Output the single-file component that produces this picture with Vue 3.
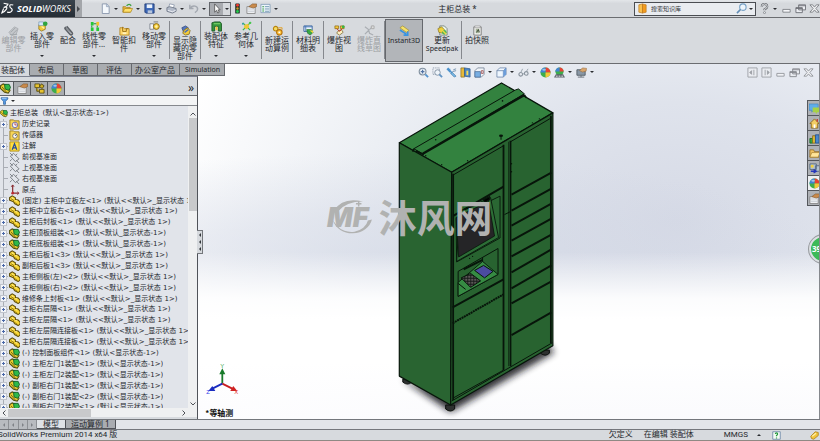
<script setup>
import { ref } from 'vue'

const icons = {
  newDoc: '<path d="M2.5 1h5l2.500 3v7.500h-7.500z" fill="#f4f8fc" stroke="#8a97ad"/><path d="M7 1v3h3" fill="#c5d3e5" stroke="#8a97ad" stroke-width=".7"/>',
  open: '<path d="M1 10V4h3l1 1h4v5z" fill="#e8b53a" stroke="#9b7310" stroke-width=".7"/><path d="M1 10l2-4h8.500L9.500 10z" fill="#ffe06a" stroke="#a87f14" stroke-width=".7"/><path d="M5 3q3-3 5 0" fill="none" stroke="#38a03a" stroke-width="1.500"/>',
  save: '<path d="M1 1h10v10H2l-1-1z" fill="#3c68b8" stroke="#243f7a"/><path d="M3 1.500h6v4H3z" fill="#e9f1fb"/><path d="M4 8h5v3H4z" fill="#b7c6dd"/>',
  print: '<path d="M4 1l5 1-1 4-5-1z" fill="#fff" stroke="#75849c" stroke-width=".7"/><path d="M1 5l3-1 7 2v3l-4 2-6-2z" fill="#b2bac8" stroke="#626b7c" stroke-width=".8"/><path d="M2 8l5 1.500L10.500 8" stroke="#edf0f5" fill="none"/>',
  undo: '<path d="M2 2v4h4M2.500 5.500c3-4 8-2 8 1 0 2-1 3-3 4" fill="none" stroke="#a3a8b0" stroke-width="1.600"/>',
  cursor: '<path d="M4 1v9l2-2 1.500 3 1.500-1-1.500-2.500H10z" fill="#fff" stroke="#444" stroke-width=".8"/>',
  traffic: '<rect x="3.500" y=".5" width="5" height="11" rx="1" fill="#22332a"/><circle cx="6" cy="2.500" r="1.600" fill="#f03a30"/><circle cx="6" cy="6" r="1.300" fill="#c99d25"/><circle cx="6" cy="9.300" r="1.600" fill="#25c84c"/>',
  props: '<path d="M1 4h9v7.500H1z" fill="#eef0f3" stroke="#777" stroke-width=".8"/><path d="M2 6.500h7M2 9h7" stroke="#b2b8c0" stroke-width=".7"/><path d="M3 4l4-3h4.500v3L8 5.500z" fill="#c98a4b" stroke="#7d5024" stroke-width=".6"/>',
  options: '<path d="M1 1.500h10v9H1z" fill="#edf6fb" stroke="#7694b2" stroke-width=".8"/><path d="M2.500 3.500h2v1h-2zM2.500 6h2v1h-2zM2.500 8.300h2v1h-2z" fill="#3c9b4b"/><path d="M5.500 4h4.500M5.500 6.500h4.500M5.500 9h4.500" stroke="#4d789e" stroke-width=".8"/>',
  partGrey: '<path d="M1 8l6-6 4 2-2 6-5 1.500z" fill="#c4c7cb" stroke="#a4a7ab" stroke-width=".8"/><path d="M3 8l5-5M5 10l5-5M2 10.500h8" stroke="#a0a4a8"/>',
  insert: '<path d="M2 4l4-2 3 2v5l-4 2-3-2z" fill="#f3cc3c" stroke="#8c6c10" stroke-width=".8"/><path d="M2 1h5v4H2z" fill="#d5e9fa" stroke="#5f86ad" stroke-width=".6"/><circle cx="9" cy="3" r="2.500" fill="#2fa540"/><path d="M5 6l3 2" stroke="#fff3a0" stroke-width="1.500"/>',
  mate: '<path d="M4 1.500l6 7c1 2-1 3-2.500 1.500L2.500 4.500C1.500 3 3 2 4 3l4.500 5" fill="none" stroke="#5c6066" stroke-width="1.700"/><path d="M3.500 2.500l5 6" stroke="#b5bac0" stroke-width=".8"/>',
  linear: '<path d="M2 1h3v4H2zM2 7h3v4H2zM8 7h3v4H8z" fill="#24c935"/><path d="M8 1h3v4H8z" fill="#f4c42a"/><path d="M3 5v2M9 5v2M5 3l3 0" stroke="#138a28"/>',
  smart: '<path d="M1 3h4l1 1h5v7H1z" fill="#ffd66a" stroke="#b08118" stroke-width=".9"/><path d="M4 2v5h4V4h2" fill="none" stroke="#966b13"/><path d="M4 8h4v2H4z" fill="#fff4c0"/>',
  move: '<path d="M1 3h4v6H1z" fill="#f5f6f8" stroke="#68707d" stroke-width=".8"/><circle cx="8" cy="6" r="3.200" fill="#f7ce3d" stroke="#8a680f"/><circle cx="8" cy="6" r="1.300" fill="#fff3af"/><path d="M5 1h5" stroke="#777"/>',
  showHide: '<path d="M2 3l4-2 3 2-1 4-4 1z" fill="#5476bf" stroke="#2d447c" stroke-width=".8"/><path d="M4 6l4-3 3 3-1 4-4 1-3-2z" fill="#f3cc3c" stroke="#806411" stroke-width=".8"/><path d="M5 8l4-3" stroke="#4e70b7" stroke-width="1.500"/>',
  feature: '<path d="M1 2l3-1h6l1.500 2v8H8V6H4v5H1z" fill="#35963e" stroke="#17551f" stroke-width=".9"/><path d="M3 3h7" stroke="#8de074"/><path d="M5 6h2v4H5z" fill="#f4ca36"/>',
  geometry: '<path d="M2 2l4 4 4-4M2 10l4-4 4 4" fill="none" stroke="#3cb64b" stroke-width="1.300"/><path d="M4 4l4-1 1 4-3 2-3-2z" fill="#efc735"/><circle cx="10" cy="2" r="1.300" fill="#47c84e"/><circle cx="2" cy="3" r="1" fill="#319eb3"/>',
  motion: '<circle cx="4" cy="4" r="2.500" fill="#f7dc60" stroke="#b6830f" stroke-width="1.200"/><circle cx="8" cy="8" r="3" fill="#ffc43b" stroke="#b6730d" stroke-width="1.200"/><circle cx="8" cy="8" r="1" fill="#fff"/><path d="M7 3h4v2" fill="none" stroke="#e09c1c"/>',
  bom: '<path d="M1 1h9v6H1z" fill="#eff6ff" stroke="#38639d"/><path d="M1 2h9M3 1v6" stroke="#4776b7"/><path d="M4 5h5l2 3-3 3-3-2z" fill="#37aa45" stroke="#266b27" stroke-width=".7"/><path d="M7 6h4v3z" fill="#f5d440"/>',
  explode: '<path d="M1 1h4v3H1zM7 1h4v3H7z" fill="#f5ca3b" stroke="#8f6914" stroke-width=".8"/><path d="M4 7l4-2 2 3-4 3-3-2z" fill="#fff0bf" stroke="#8e8050"/><path d="M3 4l3 3 3-3" fill="none" stroke="#c32c26"/><circle cx="10" cy="2" r="1.500" fill="#35b742"/>',
  explodeGrey: '<path d="M1 2l4 3 1 4 4 2M10 1L6 5M1 10l4-4" fill="none" stroke="#aaaeb3" stroke-width="1.300"/><path d="M8 1h3v3H8z" fill="#ddd" stroke="#aaa"/>',
  instant: '<path d="M1 3l3-2 7 5-3 2z" fill="#f5e26a" stroke="#a69135" stroke-width=".8"/><path d="M1 5.500l7 4.500M9.500 7v4H5" fill="none" stroke="#3794e1" stroke-width="1.800"/>',
  speed: '<path d="M3 1h5l3 3v7H3z" fill="#e9f3e7" stroke="#65706a" stroke-width=".8"/><path d="M1 4l4-2 3 3-2 4-4-1z" fill="#edcf3b" stroke="#836a15" stroke-width=".7"/><circle cx="8" cy="8" r="2.500" fill="#4db554"/><path d="M5 5l5 5" stroke="#efd843" stroke-width="1.500"/>',
  snapshot: '<path d="M2 2h8v9H2z" fill="#f7f7f4" stroke="#777"/><path d="M4 4h4v5H4z" fill="#a5b19a"/><path d="M3 1h6v2H3z" fill="#ededed" stroke="#888" stroke-width=".6"/><path d="M5 8l2-3 1 3" fill="none" stroke="#33422e"/>',
  zoomFit: '<circle cx="5" cy="5" r="3.700" fill="#e7eef5" stroke="#81909f" stroke-width="1.200"/><path d="M5 3v4M3 5h4" stroke="#5272a3" stroke-width="1.300"/><path d="M8 8l3 3" stroke="#5594cf" stroke-width="2"/>',
  zoomArea: '<path d="M1 1h7v7H1z" fill="none" stroke="#7c899c" stroke-dasharray="1 1"/><circle cx="6" cy="6" r="3" fill="#eef4fa" stroke="#8090a2"/><path d="M8 8l3 3" stroke="#6194c5" stroke-width="2"/>',
  prev: '<path d="M1 2l3 3v-3M2 1l5 6" fill="none" stroke="#4e93cd" stroke-width="1.500"/><path d="M7 6l4 4-2 1-4-4z" fill="#78b7e3" stroke="#3f7cad" stroke-width=".7"/><path d="M8 3l3-1M7 5l4-1" stroke="#718eab"/>',
  section: '<path d="M1 1h4v10H1z" fill="#e7b93a" stroke="#867027" stroke-width=".8"/><path d="M5 1l6 1v9l-6-1z" fill="#4c88c7" stroke="#2e588d" stroke-width=".8"/><path d="M7 4h2v5H7z" fill="#f6dc5b"/>',
  orient: '<path d="M1 4l3-3h7v7l-3 3H1z" fill="#f1f4f8" stroke="#768397" stroke-width=".9"/><path d="M1 5h6v6H1z" fill="#78aee2" stroke="#4b719b" stroke-width=".8"/><path d="M8 4h2v3H8z" fill="none" stroke="#a86061"/>',
  cube: '<path d="M1 4l3-3h7v7l-3 3H1z" fill="#eff7ff" stroke="#617da3" stroke-width=".8"/><path d="M1 4h7v7M8 4l3-3" fill="none" stroke="#617da3" stroke-width=".8"/><path d="M8 4l3-3v7l-3 3z" fill="#6c9edb"/>',
  glasses: '<circle cx="3" cy="8" r="2" fill="none" stroke="#87919b" stroke-width="1.200"/><circle cx="9" cy="7" r="2" fill="none" stroke="#87919b" stroke-width="1.200"/><path d="M3 6l2-4M9 5l2-3M5 8l2-1" fill="none" stroke="#949fa9"/>',
  ball: '<circle cx="6" cy="6" r="5.500" fill="#3dad4b"/><path d="M6 6V.5A5.500 5.500 0 0 1 11.500 6z" fill="#e84236"/><path d="M6 6H.5A5.500 5.500 0 0 1 6 .5z" fill="#4184d5"/><path d="M6 6h5.500a5.500 5.500 0 0 1-5.500 5.500z" fill="#f4c838"/><ellipse cx="4.500" cy="3" rx="2" ry="1" fill="#fff" opacity=".5"/>',
  scene: '<circle cx="6" cy="5" r="4.500" fill="#3dad4b"/><path d="M6 5V.5a4.500 4.500 0 0 1 4.500 4.500z" fill="#e84236"/><path d="M6 5H1.500A4.500 4.500 0 0 1 6 .5z" fill="#4184d5"/><path d="M0 11.500l2-3.500h8l2 3.500z" fill="#5d626b"/><path d="M2 10h2M5 10h2M8 10h2" stroke="#eee"/>',
  monitor: '<path d="M1 3h9v6H1z" fill="#8a98a6" stroke="#555f68"/><path d="M2 11h7M5.500 9v2" stroke="#626a73"/><path d="M4 4l3-3 4.500.500-.5 3-4 1z" fill="#d9a56b" stroke="#94683b" stroke-width=".6"/>',
  paneL: '<path d="M1 1h10v10H1z" fill="#eceef2" stroke="#8b8e94"/><path d="M7.500 3v6M5 4L3 6l2 2z" stroke="#8b8e94" fill="#8b8e94"/>',
  paneR: '<path d="M1 1h10v10H1z" fill="#eceef2" stroke="#8b8e94"/><path d="M4.500 3v6M7 4l2 2-2 2z" stroke="#8b8e94" fill="#8b8e94"/>',
  min: '<path d="M2 7h8v3H2z" fill="#f5f6f8" stroke="#777a80" stroke-width=".9"/>',
  restore: '<path d="M4 2h7.500v5.500H4zM1 5h7v5.500H1z" fill="#eceef2" stroke="#6d7076"/><path d="M4 3h7M1 6h7" stroke="#6d7076"/>',
  close: '<path d="M1 2h3l2 2.500L8 2h3L7.500 6l3.500 4H8L6 7.500 4 10H1l3.500-4z" fill="#f2f3f5" stroke="#73767b" stroke-width=".9"/>',
  assembly: '<path d="M.5 3l3-2 4.500 2 3 5-2 3-4-1-4.500-4z" fill="#ecd032" stroke="#54500d" stroke-width="1.100"/><path d="M5 1.500h5l1.500 3.500-2 3-4-1.500z" fill="#2fb848" stroke="#126028"/><path d="M2 4l5 6" stroke="#735f10"/>',
  part: '<path d="M.5 3l3-2 3.500 2v2l3 .5 2 2v2.500l-2 1.500-4-2-1-2-4.500-2z" fill="#f8d532" stroke="#5c4c08" stroke-width="1.100"/><path d="M2 4l3 1.500v2L9 10" fill="none" stroke="#7d6509" stroke-width=".8"/><path d="M3 3l2 1M7 6l2 .500" stroke="#fff3a3"/>',
  history: '<path d="M1 1h4l1 1h5v9H1z" fill="#f7d557" stroke="#9a7d24"/><circle cx="6.500" cy="6.500" r="3" fill="#eef4ff" stroke="#746aa1"/><path d="M6.500 4.500v2h2" fill="none" stroke="#c64c42"/>',
  sensor: '<path d="M1 1h4l1 1h5v9H1z" fill="#f7d557" stroke="#9a7d24"/><circle cx="6.500" cy="6.500" r="2.500" fill="#fff" stroke="#7a7160"/><path d="M6.500 6.500l2-2" stroke="#555"/>',
  note: '<path d="M1 1h10v10H1z" fill="#ffdd3c" stroke="#ad8c1e"/><path d="M3.500 9.500L6 3l2.500 6.500M4.500 7.500h3" fill="none" stroke="#264b9c" stroke-width="1.400"/>',
  plane: '<path d="M1.500 4.500L5 1.500l6 6-4 3zM1 1l3 3M8 9l3 3M9 2L7 4M3 8l-2 2" fill="none" stroke="#6a6f75" stroke-width=".9"/>',
  origin: '<path d="M4 1v9h6" fill="none" stroke="#882a30" stroke-width="1.300"/><path d="M2.500 3L4 1l1.500 2M9 8.500l2 1.500-2 1.500" fill="none" stroke="#882a30"/><circle cx="4" cy="10" r="1.500" fill="#bb2930"/>',
  config: '<path d="M1 1h5v4H1zM6 7h5v4H6z" fill="#e7c330" stroke="#574b14" stroke-width=".9"/><path d="M8 1l3 2-2 3-3-2zM3 5v4h3" fill="#d0af24" stroke="#574b14"/>',
  funnel: '<path d="M1 1h10v2L7.500 6.500V11h-3V6.500L1 3z" fill="#5499e3" stroke="#295d9c"/><path d="M2 2h7" stroke="#cbe6ff"/>',
  chat: '<path d="M0 1h10v7H5L3 10V8H0z" fill="#60ade9" stroke="#3b7cb4" stroke-width=".6"/><path d="M4 5h8v5h-3l-1 2-1-2H4z" fill="#a7d246"/>',
  home: '<path d="M1 6l5-5 5 5H9.500v5h-7V6z" fill="#f3ce65" stroke="#926c20"/><path d="M5 7h2v4H5z" fill="#fff"/><path d="M9 1v3" stroke="#c83a2e" stroke-width="1.500"/>',
  library: '<path d="M1 6h3v5H1z" fill="#35a646" stroke="#1c6c2a"/><path d="M4 3h3v8H4z" fill="#edc438" stroke="#8f6f18"/><path d="M7 2h4v9H7z" fill="#4b89cc" stroke="#28538e"/>',
  folder: '<path d="M1 10V2h4l1 2h5v6z" fill="#f0c262" stroke="#8b641e" stroke-width=".8"/><path d="M1 10l2-5h9l-2 5z" fill="#ffe59a" stroke="#9d7326" stroke-width=".7"/>',
  palette: '<path d="M1 1h7v6H1zM7 3h5v6H7z" fill="#b5c4d3" stroke="#576b82"/><path d="M2 2h3v3H2z" fill="#f1d13e"/><path d="M2 9h5M5 7l3 2-3 2" fill="none" stroke="#2636bb" stroke-width="1.400"/>',
  help: '<path d="M3 4q0-3 3-3t3 3q0 1.500-3 3v1" fill="none" stroke="#686c72" stroke-width="2.400"/><path d="M3 4q0-3 3-3t3 3q0 1.500-3 3v1" fill="none" stroke="#f3f4f6" stroke-width=".9"/><circle cx="6" cy="10.500" r="1.100" fill="#f3f4f6" stroke="#686c72" stroke-width=".7"/>',
  book: '<path d="M2 2l4-1v10l-4-1z" fill="#f8c04d" stroke="#b9741b" stroke-width=".7"/><path d="M6 1l4 1v8l-4 1z" fill="#f29b1e" stroke="#b9741b" stroke-width=".7"/>',
  glass: '<circle cx="7.500" cy="4.500" r="3.500" fill="#edf5fc" stroke="#76a1c5" stroke-width="1.200"/><path d="M5 7l-4 4" stroke="#638eb6" stroke-width="1.700"/>',
  helpBox: '<path d="M1 1h10v10H1z" fill="#f4fbf4" stroke="#5f7da0"/><path d="M4.500 4q0-1.500 1.500-1.500T7.500 4Q7.500 5 6 6v1M6 8.500V10" fill="none" stroke="#21993a" stroke-width="1.600"/>',
  tag: '<path d="M1 7l6-6 4 1v4l-6 5-3-1z" fill="#f1c43a" stroke="#a87b15"/><path d="M3 7l5-4" stroke="#fff0a6" stroke-width="1.500"/>'
}

const fileTools = [
  { icon: 'newDoc', label: '新建' },
  { icon: 'open', label: '打开' },
  { icon: 'save', label: '保存' },
  { icon: 'print', label: '打印' },
  { icon: 'undo', label: '撤消' }
]
const sideTools = [
  { icon: 'traffic', label: '重建模型' },
  { icon: 'props', label: '文件属性' },
  { icon: 'options', label: '选项' }
]

const ribbon = [
  [
    { icon: 'partGrey', text: '编辑零部件', disabled: true, size: 'slim' },
    { icon: 'insert', text: '插入零部件', drop: true },
    { icon: 'mate', text: '配合', size: 'small' },
    { icon: 'linear', text: '线性零部件...', drop: true },
    { icon: 'smart', text: '智能扣件' },
    { icon: 'move', text: '移动零部件', drop: true }
  ],
  [{ icon: 'showHide', text: '显示隐藏的零部件' }],
  [
    { icon: 'feature', text: '装配体特征', drop: true },
    { icon: 'geometry', text: '参考几何体', drop: true }
  ],
  [{ icon: 'motion', text: '新建运动算例' }],
  [{ icon: 'bom', text: '材料明细表' }],
  [
    { icon: 'explode', text: '爆炸视图' },
    { icon: 'explodeGrey', text: '爆炸直线草图', disabled: true }
  ],
  [
    { icon: 'instant', latin: 'Instant3D', size: 'wide', pressed: true },
    { icon: 'speed', text: '更新', latin: 'Speedpak', size: 'wide' }
  ],
  [{ icon: 'snapshot', text: '拍快照' }]
]

const tabs = ['装配体', '布局', '草图', '评估', '办公室产品', 'Simulation']
const activeTab = ref('装配体')

const panelTabs = [
  { icon: 'assembly', label: '设计树' },
  { icon: 'props', label: '属性' },
  { icon: 'config', label: '配置' },
  { icon: 'ball', label: '外观' }
]

const part = (text) => ({ icon: 'part', text, plus: true })
const asm = (text) => ({ icon: 'assembly', text, plus: true })
const tree = [
  { icon: 'assembly', text: '主柜总装  (默认<显示状态-1>)', root: true },
  { icon: 'history', text: '历史记录', plus: true },
  { icon: 'sensor', text: '传感器' },
  { icon: 'note', text: '注解', plus: true },
  { icon: 'plane', text: '前视基准面' },
  { icon: 'plane', text: '上视基准面' },
  { icon: 'plane', text: '右视基准面' },
  { icon: 'origin', text: '原点' },
  part('(固定) 主柜中立板左<1> (默认<<默认>_显示状态 1>)'),
  part('主柜中立板右<1> (默认<<默认>_显示状态 1>)'),
  part('主柜后封板<1> (默认<<默认>_显示状态 1>)'),
  asm('主柜顶板组装<1> (默认<默认_显示状态-1>)'),
  asm('主柜底板组装<1> (默认<默认_显示状态-1>)'),
  part('主柜后板1<3> (默认<<默认>_显示状态 1>)'),
  part('副柜后板1<3> (默认<<默认>_显示状态 1>)'),
  part('主柜侧板(左)<2> (默认<<默认>_显示状态 1>)'),
  part('主柜侧板(右)<2> (默认<<默认>_显示状态 1>)'),
  part('维修条上封板<1> (默认<<默认>_显示状态 1>)'),
  part('主柜右层隔<1> (默认<<默认>_显示状态 1>)'),
  part('主柜左层隔<1> (默认<<默认>_显示状态 1>)'),
  part('主柜左层隔连接板<1> (默认<<默认>_显示状态 1>)'),
  part('主柜右层隔连接板<1> (默认<<默认>_显示状态 1>)'),
  asm('(-) 控制面板组件<1> (默认<显示状态-1>)'),
  asm('(-) 主柜左门1装配<1> (默认<显示状态-1>)'),
  asm('(-) 主柜左门2装配<1> (默认<显示状态-1>)'),
  asm('(-) 副柜右门1装配<1> (默认<显示状态-1>)'),
  asm('(-) 副柜右门1装配<2> (默认<显示状态-1>)'),
  asm('(-) 副柜右门2装配<1> (默认<显示状态-1>)')
]

const viewTools = [
  { icon: 'zoomFit', label: '整屏显示全图' },
  { icon: 'zoomArea', label: '局部放大' },
  { icon: 'prev', label: '上一视图' },
  { icon: 'section', label: '剖面视图' },
  { icon: 'orient', label: '视图定向', drop: true },
  { icon: 'cube', label: '显示样式', drop: true },
  { icon: 'glasses', label: '隐藏/显示项目', drop: true },
  { icon: 'ball', label: '编辑外观' },
  { icon: 'scene', label: '应用布景', drop: true },
  { icon: 'monitor', label: '视图设定', drop: true }
]
const windowTools = [
  { icon: 'paneL', label: '左窗格' },
  { icon: 'paneR', label: '右窗格' },
  { icon: 'min', label: '最小化' },
  { icon: 'restore', label: '还原' },
  { icon: 'close', label: '关闭' }
]
const taskTabs = [
  { icon: 'chat', label: '论坛' },
  { icon: 'home', label: '资源' },
  { icon: 'library', label: '设计库' },
  { icon: 'folder', label: '文件探索器' },
  { icon: 'palette', label: '视图调色板' },
  { icon: 'ball', label: '外观', active: true },
  { icon: 'props', label: '自定义属性' }
]

// Drawer seams of the right-hand column: y at its left and right edge.
const seams = [
  [195, 173], [211, 189], [226, 204], [241, 219], [257, 235],
  [273, 250], [289, 266], [304, 282], [336, 313]
]
</script>

<template>
  <div class="app">
    <header class="titlebar">
      <div class="brand">
        <svg class="brand-mark" viewBox="0 0 16 14" aria-hidden="true">
          <path d="M3 1l5 1q-1 3-5 4M4 5q4 0 2 3-2 3-5 4l2-5M14 3q-4-1-4 1t2 3q2 2-1 4-2 1-4 0" fill="none" stroke="#fff" stroke-width="1.300" />
        </svg>
        <span><b>SOLID</b>WORKS</span>
      </div>
      <button class="brand-more" aria-label="菜单"><i class="right-arrow"></i></button>
      <nav class="file-tools">
        <template v-for="t in fileTools" :key="t.icon">
          <button class="tool" :aria-label="t.label"><svg class="ic" viewBox="0 0 12 12" v-html="icons[t.icon]"></svg></button>
          <button class="drop" :aria-label="t.label + '选项'"><i class="down"></i></button>
        </template>
      </nav>
      <div class="select-tool">
        <button class="cursor" aria-label="选择"><svg class="ic" viewBox="0 0 12 12" v-html="icons.cursor"></svg></button>
        <button class="cursor-drop" aria-label="选择选项"><i class="down"></i></button>
      </div>
      <nav class="side-tools">
        <button v-for="t in sideTools" :key="t.icon" class="tool" :aria-label="t.label"><svg class="ic" viewBox="0 0 12 12" v-html="icons[t.icon]"></svg></button>
      </nav>
      <button class="drop" aria-label="更多"><i class="down"></i></button>
      <h1 class="doc-title">主柜总装 *</h1>
      <label class="search">
        <svg class="ic" viewBox="0 0 12 12" v-html="icons.book"></svg>
        <input type="text" placeholder="搜索知识库" aria-label="搜索知识库" />
        <svg class="ic" viewBox="0 0 12 12" v-html="icons.glass"></svg>
        <i class="down"></i>
      </label>
      <div class="win-tools">
        <button class="tool" aria-label="帮助"><svg class="ic" viewBox="0 0 12 12" v-html="icons.help"></svg></button>
        <i class="down"></i>
        <button class="tool" aria-label="最小化"><svg class="ic" viewBox="0 0 12 12" v-html="icons.min"></svg></button>
        <button class="tool" aria-label="还原"><svg class="ic" viewBox="0 0 12 12" v-html="icons.restore"></svg></button>
        <button class="tool" aria-label="关闭"><svg class="ic" viewBox="0 0 12 12" v-html="icons.close"></svg></button>
      </div>
    </header>

    <div class="ribbon">
      <div v-for="(group, g) in ribbon" :key="g" class="group">
        <button
          v-for="item in group"
          :key="item.icon"
          class="command"
          :class="[item.size, { dropped: item.drop, pressed: item.pressed }]"
          :disabled="item.disabled"
        >
          <svg class="ic" viewBox="0 0 12 12" v-html="icons[item.icon]"></svg>
          <span class="caption">{{ item.text }} <span v-if="item.latin" class="latin">{{ item.latin }}</span></span>
          <i v-if="item.drop" class="down"></i>
        </button>
      </div>
    </div>

    <main class="work">
      <aside class="side">
        <nav class="tabs">
          <button
            v-for="t in tabs"
            :key="t"
            class="tab"
            :class="{ on: t === activeTab, long: t.length === 5, latin: t === 'Simulation' }"
            @click="activeTab = t"
          >{{ t }}</button>
        </nav>
        <div class="panel">
          <div class="panel-tabs">
            <button v-for="(p, i) in panelTabs" :key="p.icon" class="ptab" :class="{ on: i === 0 }" :aria-label="p.label">
              <svg class="ic" viewBox="0 0 12 12" v-html="icons[p.icon]"></svg>
            </button>
            <button class="expand" aria-label="展开">»</button>
          </div>
          <div class="filter">
            <svg class="ic" viewBox="0 0 12 12" v-html="icons.funnel"></svg><i class="down"></i>
          </div>
          <div class="tree-area">
            <div class="tree-clip">
              <ul class="tree">
                <li v-for="n in tree" :key="n.text" class="node" :class="{ root: n.root }">
                  <span v-if="!n.root" class="twig"><i v-if="n.plus" class="plus"></i></span>
                  <svg class="ic" viewBox="0 0 12 12" v-html="icons[n.icon]"></svg>
                  <span class="node-text">{{ n.text }}</span>
                </li>
              </ul>
            </div>
            <div class="vbar">
              <svg viewBox="0 0 8 8"><path d="M1.500 5.500L4 3l2.500 2.500" /></svg>
              <div class="vthumb"></div>
              <div class="vspace"></div>
              <svg viewBox="0 0 8 8"><path d="M1.500 2.500L4 5l2.500-2.500" /></svg>
            </div>
          </div>
          <div class="hbar">
            <svg viewBox="0 0 8 8"><path d="M5.500 1.500L3 4l2.500 2.500" /></svg>
            <div class="hthumb"></div>
            <div class="hspace"></div>
            <svg viewBox="0 0 8 8"><path d="M2.500 1.500L5 4 2.500 6.500" /></svg>
          </div>
        </div>
        <button class="splitter" aria-label="折叠面板"><i></i><i></i><i></i></button>
      </aside>

      <section class="viewport">
        <svg class="scene" viewBox="198 64 622 356" role="img" aria-label="柜体模型">
          <defs>
            <filter id="soft" x="-20%" y="-20%" width="140%" height="140%"><feGaussianBlur stdDeviation="4" /></filter>
            <pattern id="keys" width="3" height="3" patternUnits="userSpaceOnUse">
              <rect width="3" height="3" fill="#1c201e" /><circle cx="1.500" cy="1.500" r="0.800" fill="#a89a9c" />
            </pattern>
          </defs>
          <path d="M402 380L451 413L555 353L548 345L450 395z" fill="#15181b" opacity=".9" filter="url(#soft)" />
          <g fill="#2d302f" stroke="#0c0f0d">
            <path d="M403 380h9v3q-4 4-9 0zM446 406h9v4q-4 4-9 0zM541 351h9v3q-4 4-9 0z" />
          </g>
          <g stroke="#07150a" stroke-linejoin="round">
            <path d="M399.500 143L502 83L553.500 113L452 172.500z" fill="#33823f" stroke-width="1.200" />
            <path d="M399.500 143L452 172.500L451 406L399.500 377z" fill="#296431" stroke-width="1.200" />
            <path d="M452 172.500L553.500 113V346.500L451 406z" fill="#286330" stroke-width="1.200" />
            <path d="M414 149L516 90L519 89L525 94L423 154z" fill="#32803e" />
            <path d="M423 154L525 95" stroke-width="2.500" />
            <path d="M414 149l-1 3M416 151l8 4M525 95l2 3" fill="none" stroke-width="1.500" />
            <path d="M453.500 174V401M504 145V371M511 141V367M551.500 116V344" stroke-width="1.800" />
            <path d="M509 142V367" stroke-width=".6" />
            <path d="M454 175L504 146M511 142L552 118M452 402L553 343.500M453.500 399L504 371" fill="none" />
            <path d="M454 216L504 187M453 308L504 280" stroke-width="2" />
            <path d="M453 324L504 295" stroke-width="2" stroke-dasharray="2 .600" />
            <path v-for="s in seams" :key="s[0]" :d="`M512 ${s[0]}L552 ${s[1]}`" stroke-width="2" />
            <path d="M505 215L511 212" />
            <path d="M456.500 218L500.500 196.500V238.500L457 262.500z" fill="#2a6733" stroke-width=".9" />
            <path d="M460 212L491 198L499 238L457 262z" fill="#2c6d36" stroke-width=".9" />
            <path d="M460 216L489 202L495 236.500L459 257.500L456.500 219z" fill="#252527" stroke-width=".8" />
            <path d="M484 200l6-3v3l-5 3zM465 210l12-5" stroke-width="1.200" />
            <path d="M458.500 272L498.500 249V275L458.500 297z" fill="#286330" />
            <path d="M458.500 283L483 262L498.500 275L458.500 297z" fill="#368b43" stroke-width=".9" />
            <path d="M464 270L483 260.500" stroke-width="2" />
            <path d="M483 262V258M458.500 284L466 290" fill="none" />
            <path d="M461.500 278.500L471 274L481 281.500L471 288z" fill="url(#keys)" />
            <path d="M475 271L484 266L493.500 272L485 278.500z" fill="#4b4ba0" />
          </g>
          <g fill="#07150a">
            <ellipse cx="501.500" cy="136" rx="2" ry="1.200" /><path d="M501 137h1v3h-1z" />
            <circle cx="436" cy="140" r=".8" /><circle cx="503" cy="101" r=".8" /><circle cx="442" cy="165" r=".7" />
            <circle cx="468" cy="161" r=".7" /><circle cx="533" cy="123" r=".7" /><circle cx="540" cy="119" r=".7" />
            <circle cx="426" cy="156" r=".7" /><circle cx="512" cy="164" r=".7" /><circle cx="512" cy="172" r=".7" />
            <circle cx="470" cy="259" r=".6" /><circle cx="473" cy="257" r=".6" />
          </g>
          <g class="mark">
            <path d="M363 202Q343 197 334 211l4 1q8-10 25-10zM333 221A20 17 0 0 0 372 220l-4 1A17 14 0 0 1 337 226z" />
            <path d="M358 201.500h1.500v2h2v1.500h-2v2H358v-2h-2v-1.500h2z" />
            <text class="mark-latin" x="327" y="227">MF</text>
            <text class="mark-cjk" x="379" y="232">沐风网</text>
          </g>
          <g stroke-width="1.800" fill="none">
            <path d="M222 384.500V372" stroke="#187a2a" /><path d="M222 384.500L233 390" stroke="#c81e20" /><path d="M222 384.500L211 390" stroke="#1b2cc0" />
          </g>
          <path d="M222 369l3 6h-6z" fill="#187a2a" />
          <path d="M237 392l-7 0 3-5z" fill="#d02222" />
          <path d="M208 392l7 0-3-5z" fill="#1b2cc0" />
          <g class="axis">
            <text x="220" y="369" fill="#3aa34b">Y</text><text x="234" y="395" fill="#e03030">X</text><text x="206" y="395" fill="#2d3ee8">Z</text>
          </g>
          <text class="view-name" x="205" y="417">*等轴测</text>
        </svg>

        <div class="overlay-tools">
          <nav class="view-tools">
            <template v-for="t in viewTools" :key="t.icon">
              <button class="vt" :aria-label="t.label"><svg class="ic" viewBox="0 0 12 12" v-html="icons[t.icon]"></svg></button>
              <span v-if="t.drop" class="vt-drop"><i class="down"></i></span>
            </template>
          </nav>
          <nav class="view-tools faded">
            <button v-for="t in windowTools" :key="t.icon" class="vt" :aria-label="t.label"><svg class="ic" viewBox="0 0 12 12" v-html="icons[t.icon]"></svg></button>
          </nav>
        </div>
        <nav class="task-pane">
          <button v-for="t in taskTabs" :key="t.icon" :class="{ on: t.active }" :aria-label="t.label"><svg class="ic" viewBox="0 0 12 12" v-html="icons[t.icon]"></svg></button>
        </nav>
        <div class="bubble">39</div>
      </section>
    </main>

    <div class="sheets">
      <div class="sheet-nav">
        <button aria-label="首个"><i class="left-arrow"></i></button>
        <button aria-label="上一个"><i class="left-arrow"></i></button>
        <button aria-label="下一个"><i class="right-arrow"></i></button>
        <button aria-label="末个"><i class="right-arrow"></i></button>
      </div>
      <button class="sheet on">模型</button>
      <button class="sheet">运动算例 1</button>
    </div>

    <footer class="status">
      <span class="product">SolidWorks Premium 2014 x64 版</span>
      <span>欠定义</span>
      <span>在编辑 装配体</span>
      <span class="units">MMGS</span>
      <i class="up"></i>
      <svg class="ic" viewBox="0 0 12 12" v-html="icons.helpBox"></svg>
      <svg class="ic tag" viewBox="0 0 12 12" v-html="icons.tag"></svg>
    </footer>
  </div>
</template>

<style>
body {
  margin: 0;
  overflow: hidden;
}
</style>

<style scoped>
.app {
  display: flex;
  flex-direction: column;
  height: 100vh;
  box-sizing: border-box;
  border-bottom: 1px solid #8f8984;
  background: #d7dade;
  color: #24272c;
  font: 8px/8px "Noto Sans", "Noto Sans CJK SC", sans-serif;
  overflow: hidden;
}
button {
  margin: 0;
  padding: 0;
  border: 0;
  background: none;
  color: inherit;
  font: inherit;
}
.ic {
  display: block;
  width: 11px;
  height: 11px;
  flex: none;
}
.latin {
  font-size: 7px;
}
.down,
.up {
  flex: none;
  width: 0;
  height: 0;
  border: 2px solid transparent;
}
.down {
  border-top-color: #2a2c30;
  border-bottom-width: 0;
}
.up {
  border-bottom-color: #2a2c30;
  border-top-width: 0;
}
.right-arrow,
.left-arrow {
  width: 0;
  height: 0;
  border: 3px solid transparent;
}
.right-arrow {
  border-left-color: #7f8287;
  border-right-width: 0;
}
.left-arrow {
  border-right-color: #7f8287;
  border-left-width: 0;
}

.titlebar {
  display: flex;
  align-items: center;
  flex: none;
  height: 17px;
  border-bottom: 1px solid #6b6d71;
  background: linear-gradient(#e3e6e9, #d6d9dd 20%);
}
.brand {
  display: flex;
  align-items: center;
  gap: 2px;
  width: 75px;
  height: 17px;
  padding-left: 1px;
  box-sizing: border-box;
  background: linear-gradient(#39434c, #252d35);
  color: #fff;
  font: italic 9px/17px "Open Sans", sans-serif;
}
.brand-mark {
  width: 14px;
  height: 13px;
  flex: none;
}
.brand-more {
  display: flex;
  align-items: center;
  justify-content: center;
  width: 7px;
  height: 17px;
  background: #a3a6aa;
}
.brand-more .right-arrow {
  border-left-color: #45484d;
}
.file-tools {
  display: flex;
  margin-left: 17px;
}
.tool {
  display: flex;
  align-items: center;
  justify-content: center;
  width: 12px;
  height: 14px;
}
.drop {
  display: flex;
  align-items: center;
  justify-content: center;
  width: 10px;
}
.select-tool {
  display: flex;
  height: 14px;
  border: 1px solid #63666b;
  box-sizing: border-box;
}
.cursor {
  width: 13px;
  padding: 0 1px;
  background: #a8abb0;
}
.cursor-drop {
  display: flex;
  align-items: center;
  justify-content: center;
  width: 7px;
}
.side-tools {
  display: flex;
  gap: 2px;
}
.doc-title {
  flex: 1;
  margin: 0;
  text-align: center;
  font: inherit;
}
.search {
  display: flex;
  align-items: center;
  gap: 2px;
  width: 122px;
  height: 14px;
  padding: 0 2px;
  box-sizing: border-box;
  border: 1px solid #4a4d52;
  background: #e9ecf0;
}
.search input {
  flex: 1;
  min-width: 0;
  margin-left: 1px;
  padding: 0;
  border: 0;
  background: none;
  font: 6px/10px "Noto Sans CJK SC", sans-serif;
  color: #33363b;
}
.search input::placeholder {
  color: #33363b;
}
.win-tools {
  display: flex;
  align-items: center;
  gap: 2px;
  padding-left: 2px;
}
.win-tools .down {
  margin: 0 1px;
}

.ribbon {
  display: flex;
  flex: none;
  height: 45px;
  border-bottom: 1px solid #6b6d71;
}
.group {
  display: flex;
  position: relative;
  margin-right: 1px;
}
.group:not(:last-child)::after {
  content: "";
  position: absolute;
  right: -1px;
  top: 3px;
  bottom: 4px;
  width: 1px;
  background: #85888d;
}
.command {
  display: flex;
  flex-direction: column;
  align-items: center;
  width: 30px;
  padding-top: 7px;
}
.caption {
  width: 26px;
  text-align: center;
  word-break: break-all;
}
.command.dropped {
  padding-top: 3px;
}
.command .down {
  margin: auto 0 6px;
}
.command:disabled {
  color: #9b9ea3;
}
.slim {
  width: 27px;
}
.small {
  width: 22px;
}
.wide {
  width: 38px;
}
.wide .caption {
  width: 34px;
  word-break: normal;
}
.pressed {
  height: 43px;
  margin-top: 1px;
  padding-top: 5px;
  border: 1px solid #65686d;
  box-sizing: border-box;
  background: #b2b5b9;
}

.work {
  display: flex;
  flex: 1;
  min-height: 0;
}
.side {
  position: relative;
  z-index: 1;
  display: flex;
  flex-direction: column;
  flex: none;
  width: 198px;
}
.tabs {
  display: flex;
  flex: none;
  width: max-content;
  height: 12px;
}
.tab {
  padding: 0 9px 0 8px;
  border: 1px solid #66696e;
  border-width: 0 1px 1px 0;
  background: #a9acb0;
}
.tab.latin {
  padding: 0 4px 0 5px;
}
.tab.long {
  padding: 0 4px 0 3px;
}
.tab.on {
  padding: 0 4px 0 1px;
  background: #d7dade;
  border-bottom-color: #d7dade;
}
.panel {
  display: flex;
  flex-direction: column;
  flex: 1;
  min-height: 0;
  border-top: 1px solid #7c8190;
  border-right: 1px solid #505359;
  background: #d7dade;
}
.panel-tabs {
  display: flex;
  flex: none;
  height: 14px;
  padding-top: 4px;
  border-bottom: 1px solid #63666b;
}
.ptab {
  display: flex;
  align-items: center;
  justify-content: center;
  width: 17px;
  border: 1px solid #55585d;
  border-width: 1px 1px 0 0;
  box-sizing: border-box;
  background: #a9acb0;
}
.ptab.on {
  width: 14px;
  padding-right: 3px;
  background: #d7dade;
}
.expand {
  margin-left: auto;
  padding-right: 3px;
  font-size: 12px;
}
.filter {
  display: flex;
  align-items: center;
  gap: 2px;
  flex: none;
  height: 9px;
  border-bottom: 1px solid #85888d;
  background: #f3f4f5;
}
.filter .ic {
  width: 9px;
  height: 8px;
}
.tree-area {
  display: flex;
  flex: 1;
  min-height: 0;
  background: #e1e4ea;
}
.tree-clip {
  display: flex;
  flex: 1;
  min-width: 0;
  padding-top: 2px;
  overflow: hidden;
}
.tree {
  display: flex;
  flex-direction: column;
  flex: 1;
  min-width: 0;
  margin: 0 0 -5px;
  padding: 0;
  list-style: none;
  font: 7px/10px "DejaVu Sans", "Noto Sans CJK SC", sans-serif;
}
.node {
  display: flex;
  align-items: center;
  flex: 1 1 0;
  min-height: 0;
  white-space: pre;
}
.node-text {
  margin-left: 2px;
  overflow: hidden;
}
.root .ic {
  width: 8px;
}
.twig {
  position: relative;
  align-self: stretch;
  width: 9px;
  flex: none;
  background:
    linear-gradient(#a9adb4, #a9adb4) 3px 0 / 1px 100% no-repeat,
    linear-gradient(#a9adb4, #a9adb4) 3px 50% / 5px 1px no-repeat;
}
.plus {
  position: absolute;
  left: 1px;
  top: 3px;
  width: 5px;
  height: 5px;
  background:
    linear-gradient(#4a68a8, #4a68a8) 50% 50% / 3px 1px no-repeat,
    linear-gradient(#4a68a8, #4a68a8) 50% 50% / 1px 3px no-repeat,
    #f3f5f9;
  outline: 1px solid #c0c4cc;
}
.vbar {
  display: flex;
  flex-direction: column;
  align-items: center;
  width: 9px;
  padding-top: 4px;
  background: #eff0f1;
}
.vbar svg,
.hbar svg {
  width: 8px;
  height: 8px;
  flex: none;
  fill: none;
  stroke: #4e5157;
}
.vthumb {
  flex: 93;
  width: 8px;
  background: #c8c9cb;
}
.vspace {
  flex: 188;
}
.hbar {
  display: flex;
  align-items: center;
  flex: none;
  height: 9px;
  padding-right: 9px;
  border-bottom: 2px solid #d7dade;
  background: #eff0f1;
}
.hthumb {
  flex: 83;
  height: 8px;
  background: #c8c9cb;
}
.hspace {
  flex: 89;
}
.splitter {
  position: absolute;
  top: 166px;
  right: -5px;
  display: flex;
  flex-direction: column;
  align-items: center;
  justify-content: center;
  gap: 3px;
  width: 6px;
  height: 24px;
  border: 1px solid #74777c;
  border-left: 0;
  box-sizing: border-box;
  background: #d7dade;
}
.splitter i {
  width: 0;
  height: 0;
  border: 2px solid transparent;
  border-left-width: 0;
  border-right-color: #33363b;
}

.viewport {
  position: relative;
  flex: 1;
  min-width: 0;
  border-right: 1px solid #85888d;
  overflow: hidden;
  background:
    linear-gradient(180deg, transparent 53%, rgba(255, 255, 255, 0.5) 60%, rgba(255, 255, 255, 0.9) 66%, #fff 72%, #fff 84%, rgba(252, 252, 254, 0.9) 100%),
    radial-gradient(ellipse 75% 30% at 28% 55%, rgba(205, 211, 226, 0.55), rgba(205, 211, 226, 0.4) 40%, transparent 100%),
    radial-gradient(ellipse 84% 95% at 77% 44%, #d6dae6, #dfe3ec 35%, #eceff4 62%, #fff 100%);
}
.scene {
  display: block;
  width: 100%;
  height: 100%;
}
.mark {
  fill: #b1b2b1;
}
.mark-latin {
  font: italic 900 27px "Inter", "Liberation Sans", sans-serif;
}
.mark-cjk {
  font: 700 38px "Noto Sans CJK SC", sans-serif;
}
.axis {
  font: 6px "Liberation Sans", sans-serif;
}
.view-name {
  font: 700 8px "Noto Sans CJK SC", sans-serif;
  fill: #111;
}
.overlay-tools {
  position: absolute;
  top: 2px;
  left: 218px;
  right: 4px;
  display: flex;
  justify-content: space-between;
}
.view-tools {
  display: flex;
}
.vt {
  display: flex;
  align-items: center;
  justify-content: center;
  width: 14px;
  height: 12px;
}
.vt-drop {
  display: flex;
  align-items: center;
  justify-content: center;
  width: 8px;
}
.faded {
  opacity: 0.8;
}
.task-pane {
  position: absolute;
  top: 36px;
  right: -1px;
  display: flex;
  flex-direction: column;
  gap: 1px;
  width: 13px;
  padding: 1px 0 1px 1px;
  box-sizing: border-box;
  background: #54575c;
}
.task-pane button {
  height: 14px;
  padding-left: 1px;
  background: #aeb1b6;
}
.task-pane .on {
  background: #eef0f3;
}
.bubble {
  position: absolute;
  top: 171px;
  right: -19px;
  width: 24px;
  height: 24px;
  padding-left: 1px;
  border: 2px solid #dcdfe2;
  border-radius: 50%;
  outline: 1px solid #96999d;
  background: #3dba58;
  color: #fff;
  font-weight: 700;
  line-height: 24px;
}

.sheets {
  display: flex;
  flex: none;
  height: 9px;
  border-top: 1px solid #74777c;
  background: #e2e5e9;
}
.sheet-nav {
  display: flex;
  width: 37px;
}
.sheet-nav button {
  display: flex;
  align-items: center;
  justify-content: center;
  flex: 1;
  border-right: 1px solid #8d9095;
  background: #b8bbc0;
}
.sheet-nav i {
  border-width: 2px;
}
.sheet-nav .left-arrow {
  border-left-width: 0;
}
.sheet-nav .right-arrow {
  border-right-width: 0;
}
.sheet {
  padding: 0 5px;
  border-right: 1px solid #4f5257;
  border-bottom: 1px solid #4f5257;
  background: #a9acb0;
}
.sheet.on {
  padding: 0 6px;
  background: #dfe2e6;
}
.status {
  display: flex;
  align-items: center;
  gap: 11px;
  flex: none;
  height: 10px;
  border-top: 1px solid #74777c;
  padding-right: 1px;
  font-family: Roboto, "Noto Sans CJK SC", sans-serif;
}
.product {
  flex: 1;
  text-indent: -2px;
}
.units {
  margin-left: 19px;
}
.status .up {
  margin-left: -2px;
}
.status .ic {
  width: 9px;
  height: 9px;
}
.status .tag {
  margin-left: 18px;
}
</style>
